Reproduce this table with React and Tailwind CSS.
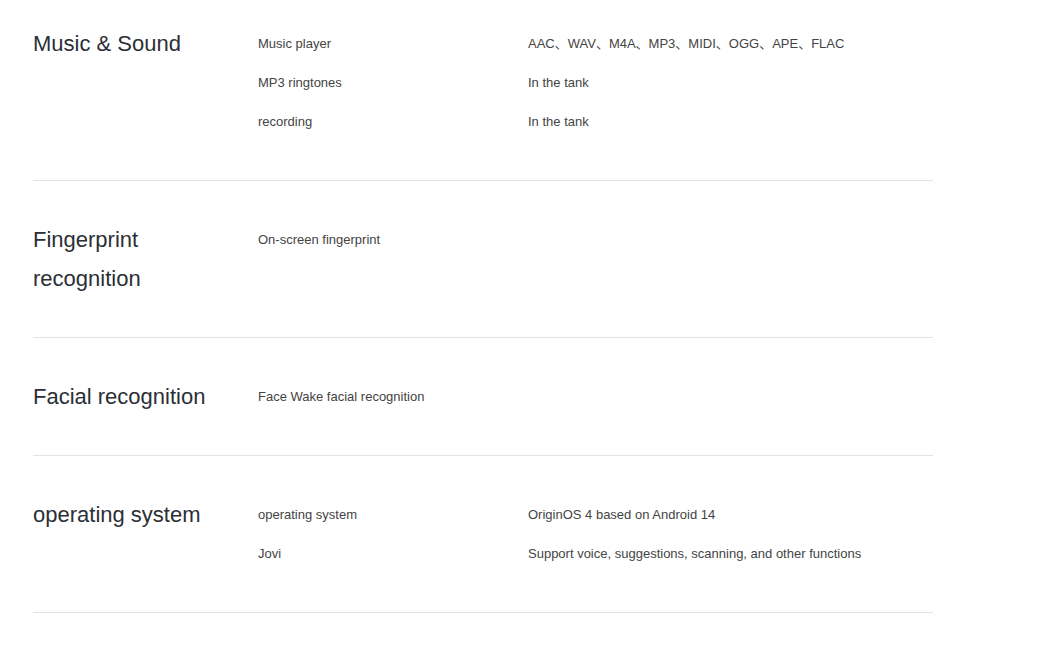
import React from "react";

const sections = [
  {
    title: "Music & Sound",
    rows: [
      ["Music player", "AAC、WAV、M4A、MP3、MIDI、OGG、APE、FLAC"],
      ["MP3 ringtones", "In the tank"],
      ["recording", "In the tank"],
    ],
  },
  {
    title: "Fingerprint recognition",
    rows: [["On-screen fingerprint", ""]],
  },
  {
    title: "Facial recognition",
    rows: [["Face Wake facial recognition", ""]],
  },
  {
    title: "operating system",
    rows: [
      ["operating system", "OriginOS 4 based on Android 14"],
      ["Jovi", "Support voice, suggestions, scanning, and other functions"],
    ],
  },
];

const App = () => {
  return (
    <div
      className="min-h-[646px] bg-white pl-[33px]"
      style={{ fontFamily: '"Liberation Sans", Arial, "Noto Sans CJK SC", sans-serif' }}
    >
      <div className="w-[900px]">
        {sections.map((section, i) => (
          <div
            key={section.title}
            className={`flex border-b border-[#e3e3e3] pb-[39px] ${i === 0 ? "pt-6" : "pt-[39px]"}`}
          >
            {/* Section title */}
            <h2 className="w-[225px] shrink-0 pr-8 text-[22px] leading-[39px] text-[#2b2f36]">
              {section.title}
            </h2>

            {/* Spec rows */}
            <div className="flex-1">
              {section.rows.map(([label, value]) => (
                <div key={label} className="flex text-[13px] leading-[39px] text-[#444]">
                  <div className="w-[270px] shrink-0">{label}</div>
                  <div className="flex-1">{value}</div>
                </div>
              ))}
            </div>
          </div>
        ))}
      </div>
    </div>
  );
};

export default App;
